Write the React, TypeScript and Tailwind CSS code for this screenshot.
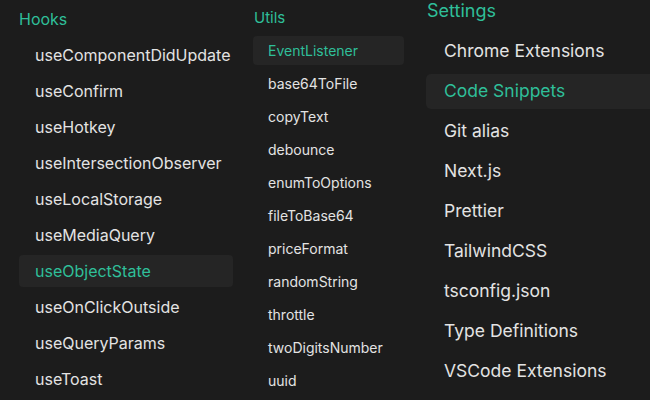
const hooks = [
  'useComponentDidUpdate',
  'useConfirm',
  'useHotkey',
  'useIntersectionObserver',
  'useLocalStorage',
  'useMediaQuery',
  'useObjectState',
  'useOnClickOutside',
  'useQueryParams',
  'useToast',
]

const utils = [
  'EventListener',
  'base64ToFile',
  'copyText',
  'debounce',
  'enumToOptions',
  'fileToBase64',
  'priceFormat',
  'randomString',
  'throttle',
  'twoDigitsNumber',
  'uuid',
]

const settings = [
  'Chrome Extensions',
  'Code Snippets',
  'Git alias',
  'Next.js',
  'Prettier',
  'TailwindCSS',
  'tsconfig.json',
  'Type Definitions',
  'VSCode Extensions',
]

export default function App() {
  return (
    <div
      className="w-[650px] h-[400px] overflow-hidden bg-[#1c1c1c] flex pl-[19px] antialiased"
      style={{ fontFamily: 'Inter, "Noto Sans", sans-serif' }}
    >
      {/* Hooks */}
      <div className="w-[214px] shrink-0 pt-[7px]">
        <h2 className="text-[16px] leading-[24px] text-[#2fbf99]">Hooks</h2>
        <ul className="mt-[8px] flex flex-col gap-[4px]">
          {hooks.map(h => (
            <li
              key={h}
              className={`h-[32px] flex items-center pl-[16px] rounded-[4px] text-[16px] ${
                h === 'useObjectState' ? 'bg-[#252525] text-[#2fbf99]' : 'text-[#e3e3e3]'
              }`}
            >
              {h}
            </li>
          ))}
        </ul>
      </div>

      {/* Utils */}
      <div className="w-[151px] shrink-0 ml-[20px] pt-[8px]">
        <h2 className="text-[15px] leading-[20px] text-[#2fbf99] pl-[1px]">Utils</h2>
        <ul className="mt-[8px] flex flex-col gap-[4px]">
          {utils.map(u => (
            <li
              key={u}
              className={`h-[29px] flex items-center pl-[15px] rounded-[4px] text-[14px] ${
                u === 'EventListener' ? 'bg-[#252525] text-[#2fbf99]' : 'text-[#e3e3e3]'
              }`}
            >
              {u}
            </li>
          ))}
        </ul>
      </div>

      {/* Settings */}
      <div className="w-[260px] shrink-0 ml-[22px] -mt-[3px]">
        <h2 className="text-[18px] leading-[28px] text-[#2fbf99] pl-[1px]">Settings</h2>
        <ul className="mt-[9px] flex flex-col gap-[5px]">
          {settings.map(s => (
            <li
              key={s}
              className={`h-[35px] flex items-center pl-[18px] rounded-[5px] text-[17.5px] ${
                s === 'Code Snippets' ? 'bg-[#252525] text-[#2fbf99]' : 'text-[#e3e3e3]'
              }`}
            >
              {s}
            </li>
          ))}
        </ul>
      </div>
    </div>
  )
}
